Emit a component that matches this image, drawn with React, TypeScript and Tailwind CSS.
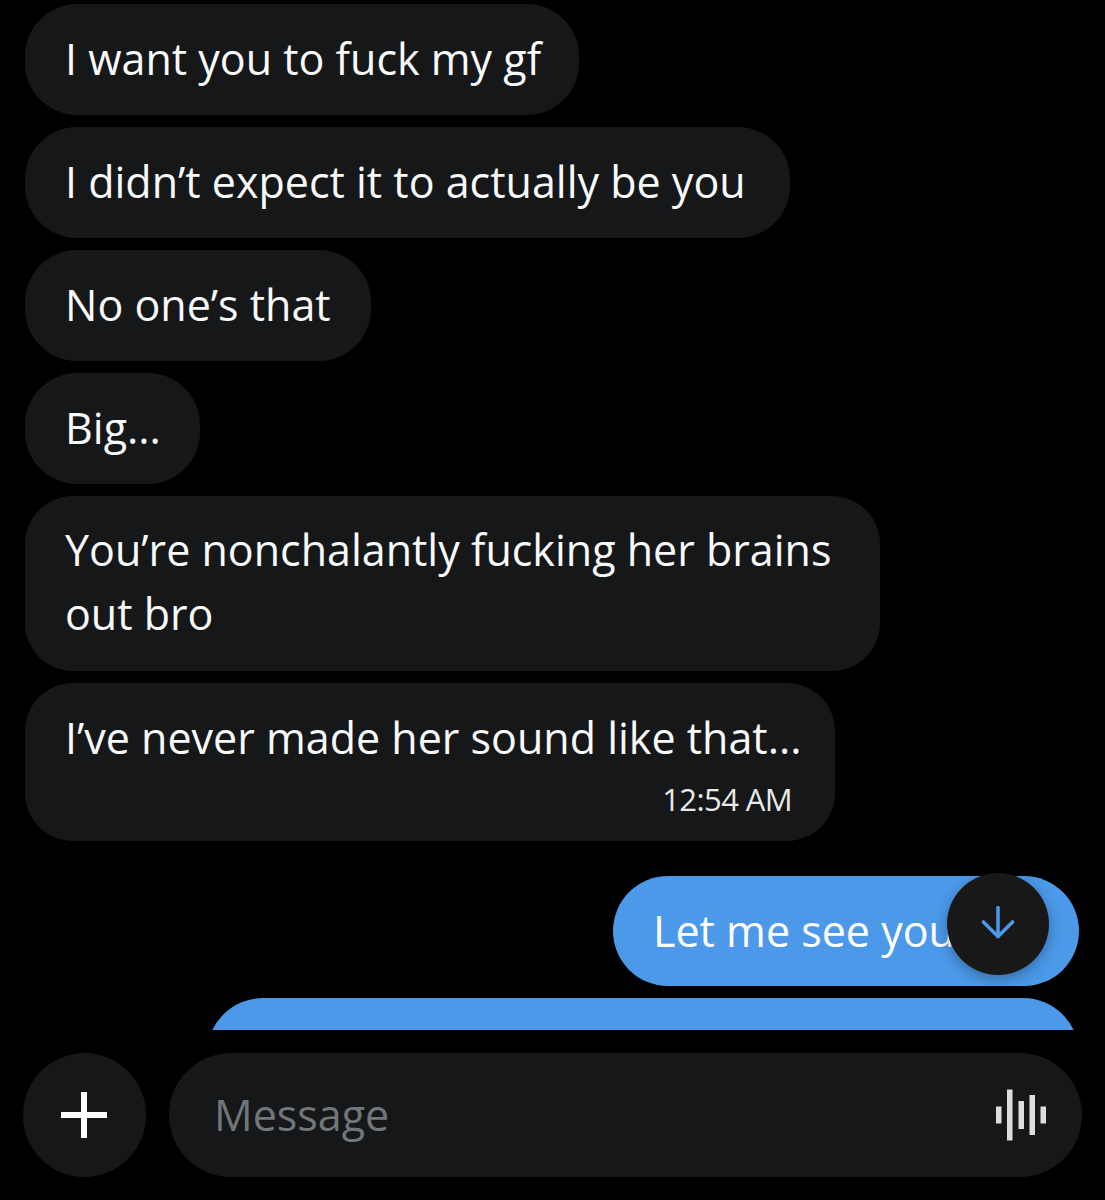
import { ArrowDown } from "lucide-react";

const incoming = [
  { text: "I want you to fuck my gf", width: "w-[554px]" },
  { text: "I didn’t expect it to actually be you", width: "w-[765px]" },
  { text: "No one’s that", width: "w-[346px]" },
  { text: "Big...", width: "w-[175px]" },
];

function VoiceIcon() {
  return (
    <svg width="52" height="52" viewBox="0 0 52 52" fill="#dcdddd">
      <rect x="0" y="17.5" width="5.5" height="17" />
      <rect x="11" y="0.5" width="5.5" height="51" />
      <rect x="22.5" y="12" width="5.5" height="28" />
      <rect x="33.5" y="6" width="5.5" height="40" />
      <rect x="44.5" y="17.5" width="5.5" height="17" />
    </svg>
  );
}

export default function App() {
  return (
    <div className="flex h-[1200px] w-[1105px] flex-col overflow-hidden bg-black font-['Open_Sans','Noto_Sans',sans-serif] text-[43px]">
      <div className="relative h-[1030px] shrink-0 overflow-hidden">
        <div className="flex flex-col gap-[12px] pt-[4px] pl-[25px] pr-[26px]">
          {incoming.map(({ text, width }) => (
            <div
              key={text}
              className={`${width} rounded-[52px] bg-[#161719] pl-[40px] pt-[25px] pb-[26px] leading-[60px] whitespace-nowrap text-[#f7f9f9]`}
            >
              {text}
            </div>
          ))}

          <div className="w-[855px] rounded-[48px] bg-[#161719] pl-[40px] pt-[22px] pb-[25px] leading-[64px] whitespace-nowrap text-[#f7f9f9]">
            You’re nonchalantly fucking her brains
            <br />
            out bro
          </div>

          <div className="w-[810px] rounded-[48px] bg-[#161719] px-[40px] pt-[25px] pb-[20px] whitespace-nowrap text-[#f7f9f9]">
            <div className="leading-[60px]">I’ve never made her sound like that...</div>
            <div className="mt-[9px] pr-[3px] text-right text-[31px] leading-[44px] tracking-[-0.6px] text-[#e7e9ea]">12:54 AM</div>
          </div>

          <div className="mt-[23px] ml-auto w-[466px] rounded-[56px] bg-[#4c99e9] pl-[40px] pt-[25px] pb-[25px] leading-[60px] whitespace-nowrap text-white">
            Let me see you
          </div>

          <div className="ml-auto h-[120px] w-[872px] rounded-[56px] bg-[#4c99e9]" />
        </div>

        <button className="absolute top-[873px] left-[947px] flex h-[102px] w-[102px] items-center justify-center rounded-full bg-[#181818] text-[#4c99e9] shadow-[0_4px_14px_rgba(0,0,0,0.3)]">
          <ArrowDown size={50} strokeWidth={1.7} className="-mt-[4px]" />
        </button>
      </div>

      <div className="mt-[23px] flex items-center gap-[23px] pl-[23px] pr-[23px]">
        <button className="flex h-[124px] w-[123px] shrink-0 items-center justify-center rounded-full bg-[#161719]">
          <svg width="48" height="48" viewBox="0 0 48 48" fill="#fff" className="-ml-[2px]">
            <rect x="21" y="1" width="6" height="46" />
            <rect x="1" y="21" width="46" height="6" />
          </svg>
        </button>
        <div className="flex h-[124px] flex-1 items-center justify-between rounded-[62px] bg-[#161719] pl-[45px] pr-[34px]">
          <span className="text-[#71767b]">Message</span>
          <VoiceIcon />
        </div>
      </div>
    </div>
  );
}
